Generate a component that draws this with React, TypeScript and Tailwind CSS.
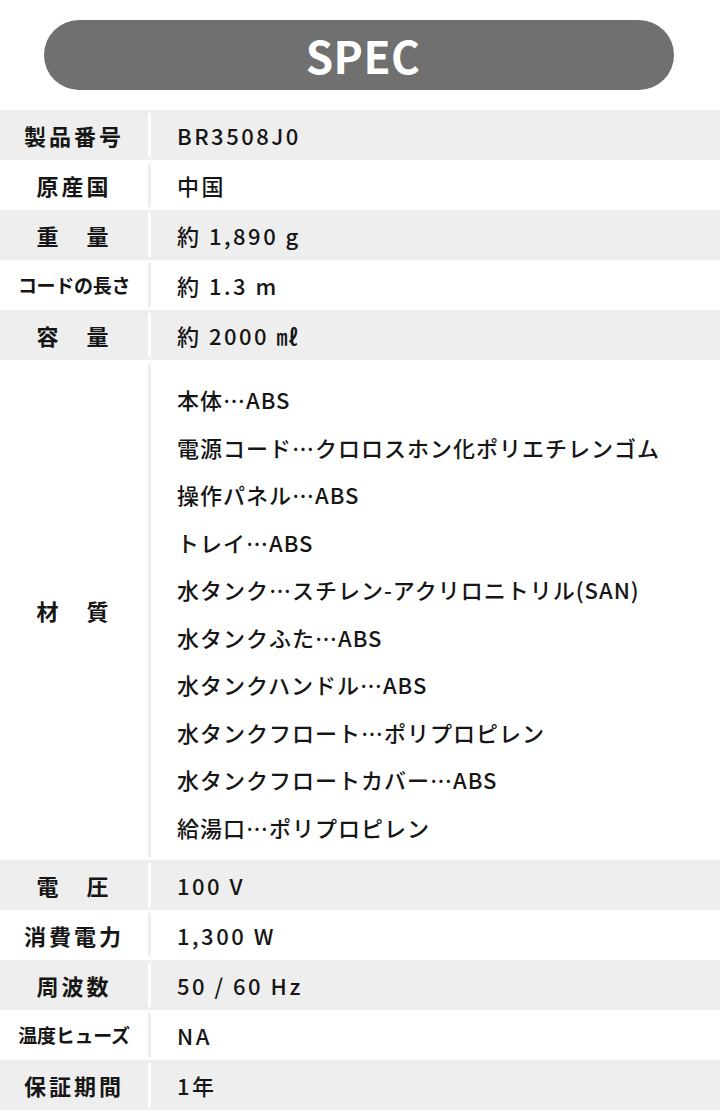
const specs = [
  { label: '製品番号', value: 'BR3508J0' },
  { label: '原産国', value: '中国' },
  { label: '重　量', value: '約 1,890 g' },
  { label: 'コードの長さ', value: '約 1.3 m', small: true },
  { label: '容　量', value: '約 2000 ㎖' },
];

const materials = [
  '本体…ABS',
  '電源コード…クロロスホン化ポリエチレンゴム',
  '操作パネル…ABS',
  'トレイ…ABS',
  '水タンク…スチレン-アクリロニトリル(SAN)',
  '水タンクふた…ABS',
  '水タンクハンドル…ABS',
  '水タンクフロート…ポリプロピレン',
  '水タンクフロートカバー…ABS',
  '給湯口…ポリプロピレン',
];

const specs2 = [
  { label: '電　圧', value: '100 V' },
  { label: '消費電力', value: '1,300 W' },
  { label: '周波数', value: '50 / 60 Hz' },
  { label: '温度ヒューズ', value: 'NA', small: true },
  { label: '保証期間', value: '1年' },
];

const font = { fontFamily: '"Noto Sans CJK JP", "Noto Sans", sans-serif' };

function Row({
  label,
  value,
  gray,
  small,
}: {
  label: string;
  value: string;
  gray: boolean;
  small?: boolean;
}) {
  return (
    <div className={`flex h-[50px] ${gray ? 'bg-[#eeeeee]' : 'bg-white'}`}>
      <div
        className={`w-[148px] flex items-center justify-center font-bold text-[#161616] ${
          small ? 'text-[19px] tracking-[-0.3px]' : 'text-[22px] tracking-[3px]'
        }`}
      >
        {label}
      </div>
      <div className={`w-[3px] my-[3px] ${gray ? 'bg-white' : 'bg-[#eeeeee]'}`} />
      <div className="flex-1 flex items-center pl-[26px] text-[22px] font-medium tracking-[2.5px] text-[#161616]">
        {value}
      </div>
    </div>
  );
}

export default function App() {
  return (
    <div className="w-[720px] h-[1110px] bg-white overflow-hidden" style={font}>
      <div className="pt-[20px] pb-[20px] pl-[44px] pr-[46px]">
        <div className="h-[70px] rounded-full bg-[#707070] flex items-center justify-center">
          <span className="text-white text-[44px] font-bold tracking-[0.5px] leading-none pl-[8px]">
            SPEC
          </span>
        </div>
      </div>

      {specs.map((s, i) => (
        <Row key={s.label} label={s.label} value={s.value} gray={i % 2 === 0} small={s.small} />
      ))}

      <div className="flex h-[500px] bg-white">
        <div className="w-[148px] flex items-center justify-center font-bold text-[22px] tracking-[3px] text-[#161616]">
          材　質
        </div>
        <div className="w-[3px] my-[3px] bg-[#eeeeee]" />
        <div className="flex-1 pl-[26px] pt-[16px] text-[22px] font-medium leading-[47.5px] tracking-[1px] text-[#161616]">
          {materials.map((m) => (
            <div key={m}>{m}</div>
          ))}
        </div>
      </div>

      {specs2.map((s, i) => (
        <Row key={s.label} label={s.label} value={s.value} gray={i % 2 === 0} small={s.small} />
      ))}
    </div>
  );
}
